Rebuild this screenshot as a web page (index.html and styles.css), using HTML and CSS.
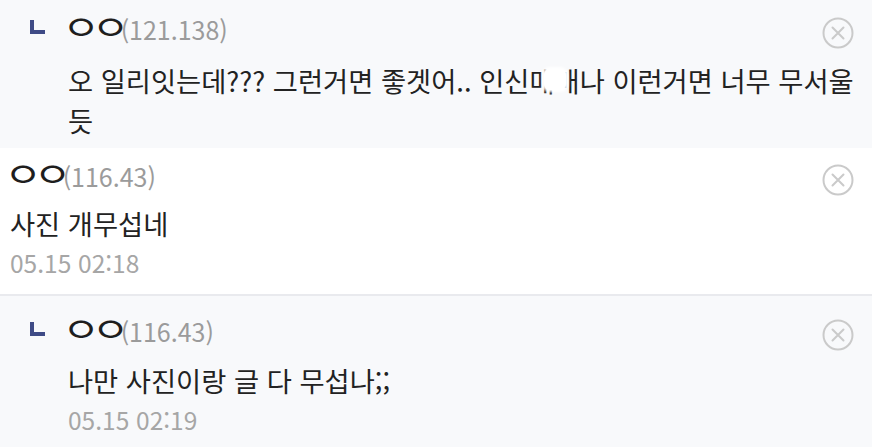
FILE: index.html
```html
<!DOCTYPE html>
<html lang="ko">
<head>
  <meta charset="UTF-8">
  <meta name="viewport" content="width=device-width, initial-scale=1.0">
  <title>댓글</title>
  <link rel="stylesheet" href="styles.css">
</head>
<body>

<ul class="comment-list">
  <li class="comment reply first">
    <div class="head">
      <span class="reply-mark"></span>
      <span class="nick"><span class="name">ㅇㅇ</span><span class="ip">(121.138)</span></span>
      <button class="del" title="삭제">
        <svg width="32" height="32" viewBox="0 0 32 32"><circle cx="16" cy="16" r="14.5" fill="none" stroke="#cacaca" stroke-width="2"/><path d="M10.5 10.5 L21.5 21.5 M21.5 10.5 L10.5 21.5" stroke="#cacaca" stroke-width="2" stroke-linecap="round"/></svg>
      </button>
    </div>
    <p class="text"><span>오 일리잇는데??? 그런거면 좋겟어.. 인신</span><span class="censor">매매</span><span>나 이런거면 너무 무서울 </span><span>듯</span></p>
  </li>

  <li class="comment">
    <div class="head">
      <span class="nick"><span class="name">ㅇㅇ</span><span class="ip">(116.43)</span></span>
      <button class="del" title="삭제">
        <svg width="32" height="32" viewBox="0 0 32 32"><circle cx="16" cy="16" r="14.5" fill="none" stroke="#cacaca" stroke-width="2"/><path d="M10.5 10.5 L21.5 21.5 M21.5 10.5 L10.5 21.5" stroke="#cacaca" stroke-width="2" stroke-linecap="round"/></svg>
      </button>
    </div>
    <p class="text">사진 개무섭네</p>
    <div class="date">05.15 02:18</div>
  </li>

  <li class="comment reply">
    <div class="head">
      <span class="reply-mark"></span>
      <span class="nick"><span class="name">ㅇㅇ</span><span class="ip">(116.43)</span></span>
      <button class="del" title="삭제">
        <svg width="32" height="32" viewBox="0 0 32 32"><circle cx="16" cy="16" r="14.5" fill="none" stroke="#cacaca" stroke-width="2"/><path d="M10.5 10.5 L21.5 21.5 M21.5 10.5 L10.5 21.5" stroke="#cacaca" stroke-width="2" stroke-linecap="round"/></svg>
      </button>
    </div>
    <p class="text">나만 사진이랑 글 다 무섭나;;</p>
    <div class="date">05.15 02:19</div>
  </li>
</ul>

</body>
</html>
```

FILE: styles.css
```css
body {
  margin: 0;
  padding: 0;
  background-color: #f8f9fb;
  font-family: "Noto Sans CJK KR", "Noto Sans", sans-serif;
  color: #222;
}

.comment-list {
  list-style: none;
  margin: 0;
  padding: 0;
}

.comment {
  background-color: #fff;
  padding: 10px 10px 11px 10px;
  border-bottom: 2px solid #e9eaee;
}

.comment.reply {
  background-color: #f8f9fb;
  padding: 17px 10px 9px 30px;
  border-bottom: none;
}

.comment.reply.first {
  padding-top: 11px;
  padding-bottom: 8px;
}

.head {
  display: flex;
  align-items: center;
  height: 36px;
}

.reply-mark {
  width: 11px;
  height: 10px;
  border-left: 4px solid #3f4b86;
  border-bottom: 4px solid #3f4b86;
  margin-right: 23px;
  margin-top: -5px;
}

.nick {
  flex: 1;
  line-height: 36px;
  white-space: nowrap;
}

/* jamo nickname drawn wide like the app font */
.name {
  display: inline-block;
  font-size: 34px;
  letter-spacing: -7px;
  transform: scaleX(1.22);
  transform-origin: 0 50%;
  margin-left: -5.9px;
  margin-right: 10px;
  color: #1e1e1e;
}

.ip {
  color: #9b9b9b;
  font-size: 25px;
}

.del {
  border: none;
  background: none;
  padding: 0;
  width: 32px;
  height: 32px;
  margin-top: 8px;
  margin-right: 8px;
  cursor: pointer;
}

.del svg {
  display: block;
}

.text {
  margin: 9px 0 0;
  font-size: 27.3px;
  line-height: 40px;
}

.reply .text {
  margin-top: 11px;
}

.first .text {
  margin-top: 13px;
}

.reply .text,
.reply .date {
  margin-left: 38px;
}

.censor {
  position: relative;
}

.censor::after {
  content: "";
  position: absolute;
  left: 30%;
  right: 28%;
  top: 22%;
  bottom: 24%;
  background-color: #fff;
  border-radius: 6px;
  box-shadow: 0 0 3px 2px #fff;
}

.date {
  font-size: 24.5px;
  line-height: 40px;
  color: #a6a6a6;
}
```
